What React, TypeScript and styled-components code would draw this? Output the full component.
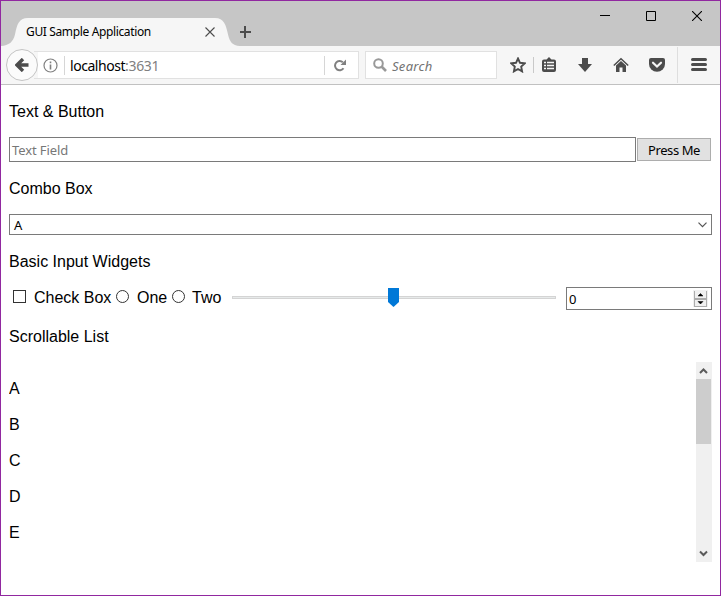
import React from "react";
import styled, { createGlobalStyle } from "styled-components";

const Global = createGlobalStyle`
  * { box-sizing: border-box; }
  body { margin: 0; background: #fff; }
`;

const UI = `"Noto Sans", "Open Sans", sans-serif`;

const Window = styled.div`
  width: 721px;
  height: 596px;
  border: 1px solid #9128a0;
  background: #fff;
  overflow: hidden;
  font: 16px/18px "Liberation Sans", Arial, sans-serif;
  color: #000;
`;

const TitleBar = styled.header`
  height: 45px;
  background: #c6c6c6;
  display: flex;
  justify-content: space-between;
`;

const TabStrip = styled.div`
  display: flex;
  padding-top: 17px;
`;

const Tab = styled.div`
  display: grid;
  width: 239px;
  height: 28px;
  > * { grid-area: 1 / 1; }
`;

const TabFace = styled.div`
  display: flex;
  align-items: center;
  justify-content: space-between;
  padding: 0 25px 0 25px;
`;

const Label = styled.span<{ $size: number; $spacing?: number; $color?: string; $italic?: boolean }>`
  font-family: ${UI};
  font-size: ${(p) => p.$size}px;
  line-height: 18px;
  letter-spacing: ${(p) => p.$spacing ?? 0}px;
  color: ${(p) => p.$color ?? "#000"};
  font-style: ${(p) => (p.$italic ? "italic" : "normal")};
  white-space: nowrap;
`;

const WindowControls = styled.div`
  display: flex;
  gap: 36px;
  padding: 10px 18px 0 0;
  height: 20px;
`;

const Icon = styled.svg`
  display: block;
  flex: none;
`;

const NavBar = styled.nav`
  height: 39px;
  background: #f6f6f6;
  border-bottom: 1px solid #c1c1c1;
  display: flex;
  align-items: center;
  padding: 0 13px 0 5px;
`;

const BackButton = styled.button`
  width: 32px;
  height: 32px;
  padding: 0;
  border: 1px solid #c4c4c4;
  border-radius: 50%;
  background: #fbfbfb;
  display: grid;
  place-items: center;
  flex: none;
`;

const AddressBar = styled.div`
  width: 325px;
  height: 28px;
  margin-left: -4px;
  border: 1px solid #e1e1e1;
  border-left: 0;
  background: linear-gradient(90deg, #f6f6f6 0 4px, #fff 4px);
  display: flex;
  align-items: center;
  padding-left: 9px;
`;

const Backed = styled.div`
  display: flex;
  align-items: center;
  ${BackButton} { z-index: 1; }
`;

const Divider = styled.i<{ $h: number; $ml: number; $mr: number; $c?: string }>`
  width: 1px;
  height: ${(p) => p.$h}px;
  margin: 0 ${(p) => p.$mr}px 0 ${(p) => p.$ml}px;
  background: ${(p) => p.$c ?? "#d6d6d6"};
  flex: none;
`;

const Url = styled.div`
  flex: 1;
  display: flex;
  padding-top: 2px;
`;

const SearchBar = styled.div`
  width: 132px;
  height: 28px;
  margin-left: 6px;
  border: 1px solid #e1e1e1;
  background: #fff;
  display: flex;
  align-items: center;
  gap: 5px;
  padding-left: 7px;
  ${Label} { padding-top: 2px; }
`;

const Tools = styled.div`
  flex: 1;
  display: flex;
  align-items: center;
  padding-left: 13px;
`;

const ToolGroup = styled.div`
  display: flex;
  gap: 20px;
`;

const Page = styled.main`
  padding: 18px 8px 0;
`;

const Heading = styled.div`
  height: 18px;
  margin-bottom: 16px;
`;

const FieldRow = styled.div`
  display: flex;
  align-items: center;
  gap: 1px;
  padding-right: 1px;
  margin-bottom: 18px;
`;

const TextField = styled.div`
  flex: 1;
  height: 25px;
  border: 1px solid #7a7a7a;
  padding: 3px 2px 0;
  display: flex;
`;

const PressButton = styled.button`
  width: 74px;
  height: 23px;
  border: 1px solid #adadad;
  background: #e1e1e1;
  padding: 1px 0 0;
  display: flex;
  justify-content: center;
  align-items: center;
`;

const Combo = styled.div`
  height: 21px;
  border: 1px solid #7a7a7a;
  display: flex;
  align-items: center;
  justify-content: space-between;
  padding: 0 4px;
  margin-bottom: 18px;
`;

const Widgets = styled.div`
  height: 23px;
  display: flex;
  align-items: center;
  margin: 0 0 18px 4px;
`;

const Choice = styled.label<{ $w: number; $gap: number }>`
  width: ${(p) => p.$w}px;
  display: flex;
  align-items: center;
  gap: ${(p) => p.$gap}px;
  height: 18px;
  margin-top: -2px;
  white-space: nowrap;
`;

const Box = styled.i<{ $round?: boolean }>`
  width: 13px;
  height: 13px;
  border: 1px solid #333;
  border-radius: ${(p) => (p.$round ? "50%" : "0")};
  background: #fff;
  margin-bottom: 3px;
  flex: none;
`;

const Slider = styled.div`
  display: grid;
  align-items: center;
  width: 324px;
  margin: -2px 10px 0 0;
  > * { grid-area: 1 / 1; }
`;

const Track = styled.div`
  height: 3px;
  border: 1px solid #d4d4d4;
  background: #e7eaea;
`;

const Thumb = styled(Icon)`
  margin-left: 156px;
`;

const Spinner = styled.div`
  width: 146px;
  height: 23px;
  border: 1px solid #7a7a7a;
  display: flex;
  align-items: center;
  justify-content: space-between;
  padding: 0 3px 0 2px;
`;

const Scroller = styled.section`
  height: 200px;
  display: flex;
  justify-content: space-between;
  overflow: hidden;
`;

const List = styled.ul`
  list-style: none;
  margin: 0;
  padding: 18px 0 0;
  display: flex;
  flex-direction: column;
  gap: 18px;
`;

const Item = styled.li`
  height: 18px;
`;

const ScrollBar = styled.div`
  width: 16px;
  background: #f0f0f0;
  display: flex;
  flex-direction: column;
`;

const ScrollThumb = styled.div`
  width: 15px;
  height: 65px;
  background: #cdcdcd;
  margin-bottom: auto;
`;

const dark = "#4c4c4c";

export default function App() {
  return (
    <Window>
      <Global />
      <TitleBar>
        <TabStrip>
          <Tab>
            <Icon width="239" height="28">
              <path
                d="M0 28C8 27.5 12 24 14 16.500C16 7 17.500 0 27 0H214C223 0 225 7 227 16.500C229 24 231 27.500 239 28Z"
                fill="#f6f6f6"
              />
            </Icon>
            <TabFace>
              <Label $size={12} $spacing={-0.36}>GUI Sample Application</Label>
              <Icon width="10" height="10">
                <path d="M.5 .5l9 9M9.500 .5l-9 9" stroke="#4c4c4c" strokeWidth="1.100" />
              </Icon>
            </TabFace>
          </Tab>
          <Icon width="12" height="28">
            <path d="M-1 14h12M5 8v12" stroke={dark} strokeWidth="2" />
          </Icon>
        </TabStrip>
        <WindowControls>
          <Icon width="10" height="10"><path d="M0 4.500h10" stroke="#000" /></Icon>
          <Icon width="10" height="10"><path d="M.5 .5h9v9h-9z" fill="none" stroke="#000" /></Icon>
          <Icon width="10" height="10"><path d="M0 0l10 10M10 0L0 10" stroke="#000" strokeWidth="1.100" /></Icon>
        </WindowControls>
      </TitleBar>

      <NavBar>
        <Backed>
          <BackButton aria-label="Back">
            <Icon width="14" height="14">
              <path d="M8 1L2 7l6 6M3 7h10.500" stroke={dark} strokeWidth="3.400" fill="none" />
            </Icon>
          </BackButton>
          <AddressBar>
            <Icon width="15" height="15">
              <circle cx="7.500" cy="7.500" r="6.500" fill="none" stroke="#808080" strokeWidth="1.200" />
              <path d="M7.500 6.500v5M7.500 3.500v1.700" stroke="#808080" strokeWidth="1.600" />
            </Icon>
            <Divider $h={19} $ml={6} $mr={5} />
            <Url>
              <Label $size={14} $spacing={-0.45}>localhost</Label>
              <Label $size={14} $spacing={-0.35} $color="#808080">:3631</Label>
            </Url>
            <Divider $h={19} $ml={0} $mr={9} />
            <Icon width="24" height="13">
              <path d="M9.500 9.200A4.600 4.600 0 1 1 8.800 3.300" fill="none" stroke="#808080" strokeWidth="2" />
              <path d="M12 .5V6H6.500z" fill="#808080" />
            </Icon>
          </AddressBar>
        </Backed>
        <SearchBar>
          <Icon width="14" height="14">
            <circle cx="5.500" cy="5.500" r="4.300" fill="none" stroke="#999" strokeWidth="2" />
            <path d="M8.500 8.500l4.500 4.500" stroke="#999" strokeWidth="2.600" />
          </Icon>
          <Label $size={13} $spacing={0.3} $italic $color="#737373">Search</Label>
        </SearchBar>
        <Tools>
          <Icon width="16" height="16">
            <path d="M8 1.500l2 4.300 4.700.6-3.500 3.200.9 4.800L8 12l-4.100 2.400.9-4.800L1.300 6.400 6 5.800z" fill="none" stroke={dark} strokeWidth="1.900" />
          </Icon>
          <Divider $h={16} $ml={7} $mr={7} $c="#c9c9c9" />
          <ToolGroup>
            <Icon width="16" height="16">
              <path d="M3 2.500h2.500L8 0l2.500 2.500H13a2 2 0 0 1 2 2V13a2 2 0 0 1-2 2H3a2 2 0 0 1-2-2V4.500a2 2 0 0 1 2-2z" fill={dark} />
              <path d="M3 5.500h2M6 5.500h7M3 8.500h2M6 8.500h7M3 11.500h2M6 11.500h7" stroke="#f6f6f6" strokeWidth="1.700" />
            </Icon>
            <Icon width="16" height="16">
              <path d="M5 1h6v6h4l-7 8-7-8h4z" fill={dark} />
            </Icon>
            <Icon width="16" height="16">
              <path d="M.8 8.500L8 1.700l7.200 6.800" fill="none" stroke={dark} strokeWidth="1.500" />
              <path d="M3 8.500L8 4l5 4.500V15H9.500v-4.500h-3V15H3z" fill={dark} />
            </Icon>
            <Icon width="16" height="16">
              <path d="M2 1h12q2 0 2 2v4a8 7.800 0 0 1-16 0V3q0-2 2-2z" fill={dark} />
              <path d="M4 5.700l4 3.800 4-3.800" fill="none" stroke="#f6f6f6" strokeWidth="2.200" strokeLinecap="round" />
            </Icon>
          </ToolGroup>
          <Divider $h={36} $ml={12} $mr={13} $c="#dedede" />
          <Icon width="16" height="14">
            <path d="M1.500 1.500h13M1.500 6.500h13M1.500 11.500h13" stroke={dark} strokeWidth="3" strokeLinecap="round" />
          </Icon>
        </Tools>
      </NavBar>

      <Page>
        <Heading>Text &amp; Button</Heading>
        <FieldRow>
          <TextField><Label $size={13} $spacing={-0.1} $color="#777">Text Field</Label></TextField>
          <PressButton><Label $size={13} $spacing={-0.4}>Press Me</Label></PressButton>
        </FieldRow>
        <Heading>Combo Box</Heading>
        <Combo>
          <Label $size={13}>A</Label>
          <Icon width="9" height="6"><path d="M.5 .7l4 4 4-4" fill="none" stroke="#555" strokeWidth="1.200" /></Icon>
        </Combo>
        <Heading>Basic Input Widgets</Heading>
        <Widgets>
          <Choice $w={103} $gap={8}><Box />Check Box</Choice>
          <Choice $w={56} $gap={8}><Box $round />One</Choice>
          <Choice $w={60} $gap={7}><Box $round />Two</Choice>
          <Slider>
            <Track />
            <Thumb width="11" height="19"><path d="M0 0h11v14l-5.500 5L0 14z" fill="#0078d7" /></Thumb>
          </Slider>
          <Spinner>
            <Label $size={13} $spacing={-0.4}>0</Label>
            <Icon width="15" height="17">
              <path d="M0 0h15v17H0z" fill="#f0f0f0" />
              <path d="M1.500 1v15M13.500 1v15M1 16.500h13" stroke="#acacac" fill="none" />
              <path d="M1 9h13" stroke="#acacac" strokeWidth="2" />
              <path d="M5 6h5L7.500 3.500zM5 11.500h5l-2.500 2.500z" fill="#000" stroke="#000" strokeWidth=".5" />
            </Icon>
          </Spinner>
        </Widgets>
        <Heading>Scrollable List</Heading>
        <Scroller>
          <List>
            {["A", "B", "C", "D", "E"].map((t) => <Item key={t}>{t}</Item>)}
          </List>
          <ScrollBar>
            <Icon width="16" height="17"><path d="M4 11L7.500 7.500l3.500 3.500" fill="none" stroke="#5a5a5a" strokeWidth="2" /></Icon>
            <ScrollThumb />
            <Icon width="16" height="17"><path d="M4 6.500l3.500 3.500 3.500-3.500" fill="none" stroke="#5a5a5a" strokeWidth="2" /></Icon>
          </ScrollBar>
        </Scroller>
      </Page>
    </Window>
  );
}
